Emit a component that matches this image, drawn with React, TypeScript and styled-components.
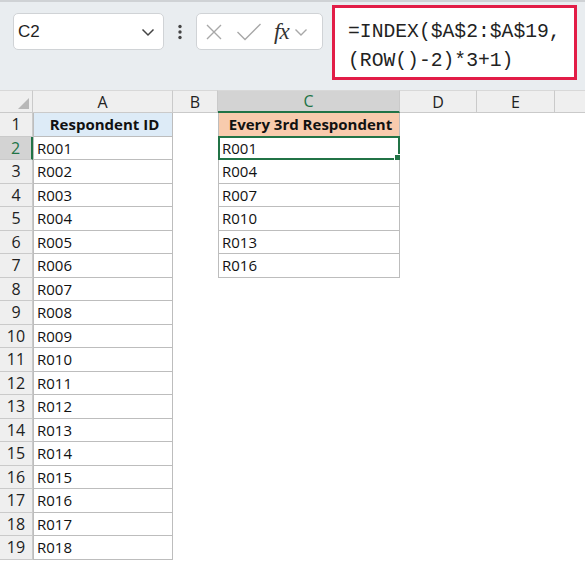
import React from "react";
import styled, { createGlobalStyle } from "styled-components";

const GlobalStyle = createGlobalStyle`
  html, body {
    margin: 0;
    padding: 0;
    background: #ffffff;
  }
  body {
    width: 585px;
    height: 562px;
    overflow: hidden;
    font-family: "Open Sans", "Liberation Sans", sans-serif;
  }
`;

const Window = styled.div`
  width: 585px;
  height: 562px;
  overflow: hidden;
  display: flex;
  flex-direction: column;
`;

const Toolbar = styled.div`
  height: 90px;
  flex: none;
  box-sizing: border-box;
  background: #e9edf0;
  border-top: 2px solid #cfd2d5;
  display: flex;
  align-items: flex-start;
  padding: 3px 0 0 13px;
`;

const Box = styled.div<{ $w: number }>`
  width: ${(p) => p.$w}px;
  height: 37px;
  margin-top: 8px;
  box-sizing: border-box;
  background: #ffffff;
  border: 1px solid #d0d3d6;
  border-radius: 5px;
  display: flex;
  align-items: center;
`;

const NameText = styled.span`
  flex: 1;
  padding-left: 4px;
  font-family: "Liberation Sans", Arial, sans-serif;
  font-size: 17px;
  color: #1f1f1f;
`;

const Dots = styled.div`
  width: 32px;
  height: 37px;
  margin-top: 8px;
  display: flex;
  align-items: center;
  justify-content: center;
`;

const Fx = styled.span`
  font-family: "Liberation Serif", serif;
  font-style: italic;
  font-size: 23px;
  color: #333;
  margin-left: 12px;
  letter-spacing: -1px;
`;

const Formula = styled.div`
  margin-left: 9px;
  width: 245px;
  height: 75px;
  box-sizing: border-box;
  background: #ffffff;
  border: 3px solid #e21d47;
  padding: 10px 0 0 13px;
  font-family: "Liberation Mono", "DejaVu Sans Mono", monospace;
  font-size: 19.7px;
  line-height: 29px;
  color: #222;
  white-space: pre;
`;

const Sheet = styled.div`
  display: grid;
  grid-template-columns: 33px 140px 45px 182px 77px 78px 78px;
  grid-auto-rows: 23.5px;
  grid-template-rows: 23px;
  background: #ffffff;
`;

const ColHead = styled.div<{ $active?: boolean }>`
  box-sizing: border-box;
  background: ${(p) => (p.$active ? "#d3d3d3" : "#efefef")};
  border-right: 1px solid #cacaca;
  border-top: 1px solid #d8d8d8;
  border-bottom: ${(p) => (p.$active ? "2px solid #217346" : "1px solid #cacaca")};
  color: ${(p) => (p.$active ? "#217346" : "#222")};
  font-size: 16px;
  display: flex;
  align-items: center;
  justify-content: center;
`;

const Corner = styled(ColHead)`
  position: relative;
  &::after {
    content: "";
    position: absolute;
    right: 3px;
    bottom: 3px;
    width: 0;
    height: 0;
    border-left: 11px solid transparent;
    border-bottom: 11px solid #b8b8b8;
  }
`;

const RowHead = styled.div<{ $active?: boolean }>`
  box-sizing: border-box;
  background: ${(p) => (p.$active ? "#d3d3d3" : "#efefef")};
  border-bottom: 1px solid #cacaca;
  border-right: ${(p) => (p.$active ? "2px solid #217346" : "1px solid #cacaca")};
  color: ${(p) => (p.$active ? "#217346" : "#222")};
  font-size: 16px;
  display: flex;
  align-items: center;
  justify-content: center;
`;

const Cell = styled.div<{ $fill?: string; $bold?: boolean; $grid?: boolean }>`
  box-sizing: border-box;
  background: ${(p) => p.$fill || "#ffffff"};
  border-right: ${(p) => (p.$grid ? "1px solid #bdbdbd" : "none")};
  border-bottom: ${(p) => (p.$grid ? "1px solid #bdbdbd" : "none")};
  border-left: ${(p) => (p.$grid ? "1px solid #bdbdbd" : "none")};
  font-size: 15px;
  font-weight: ${(p) => (p.$bold ? 700 : 400)};
  color: #111;
  padding-left: 3px;
  display: flex;
  align-items: center;
  justify-content: ${(p) => (p.$bold ? "center" : "flex-start")};
  white-space: nowrap;
  overflow: visible;
  position: relative;
`;

const Selected = styled.div`
  position: absolute;
  left: -1px;
  top: -1px;
  right: -1px;
  bottom: -1px;
  border: 2px solid #217346;
  pointer-events: none;
  &::after {
    content: "";
    position: absolute;
    right: -6px;
    bottom: -6px;
    width: 8px;
    height: 8px;
    background: #217346;
    border: 1px solid #ffffff;
  }
`;

// last column runs off the right edge, so its letter is not in view
const cols = ["A", "B", "C", "D", "E", ""];
const every = ["R001", "R004", "R007", "R010", "R013", "R016"];

function Chevron({ x = 0 }: { x?: number }) {
  return (
    <svg width="14" height="10" viewBox="0 0 14 10" style={{ marginRight: x }}>
      <path d="M1.5 2.5 L7 8 L12.5 2.5" fill="none" stroke="#444" strokeWidth="1.5" />
    </svg>
  );
}

export default function App() {
  const rows = Array.from({ length: 19 }, (_, i) => i + 1);
  return (
    <Window>
      <GlobalStyle />
      <Toolbar>
        <Box $w={151}>
          <NameText>C2</NameText>
          <Chevron x={8} />
        </Box>
        <Dots>
          <svg width="6" height="16" viewBox="0 0 6 16">
            <circle cx="3" cy="2.5" r="1.7" fill="#444" />
            <circle cx="3" cy="8" r="1.7" fill="#444" />
            <circle cx="3" cy="13.5" r="1.7" fill="#444" />
          </svg>
        </Dots>
        <Box $w={127}>
          <svg width="18" height="18" viewBox="0 0 18 18" style={{ marginLeft: 8 }}>
            <path d="M2 2 L16 16 M16 2 L2 16" stroke="#a8a8a8" strokeWidth="1.4" />
          </svg>
          <svg width="26" height="20" viewBox="0 0 26 20" style={{ marginLeft: 13 }}>
            <path d="M1.5 10 L9 17.5 L24.5 2" fill="none" stroke="#a8a8a8" strokeWidth="1.4" />
          </svg>
          <Fx>fx</Fx>
          <svg width="14" height="10" viewBox="0 0 14 10" style={{ marginLeft: 5 }}>
            <path d="M1.5 2.5 L7 8 L12.5 2.5" fill="none" stroke="#a8a8a8" strokeWidth="1.4" />
          </svg>
        </Box>
        <Formula>{"=INDEX($A$2:$A$19,\n(ROW()-2)*3+1)"}</Formula>
      </Toolbar>
      <Sheet>
        <Corner />
        {cols.map((c, i) => (
          <ColHead key={i} $active={c === "C"}>
            {c}
          </ColHead>
        ))}
        {rows.map((r) => (
          <React.Fragment key={r}>
            <RowHead $active={r === 2}>{r}</RowHead>
            {r === 1 ? (
              <Cell $grid $bold $fill="#ddebf7">
                Respondent ID
              </Cell>
            ) : (
              <Cell $grid>{"R" + String(r - 1).padStart(3, "0")}</Cell>
            )}
            <Cell />
            {r === 1 ? (
              <Cell $grid $bold $fill="#f8cbad">
                Every 3rd Respondent
              </Cell>
            ) : r <= 7 ? (
              <Cell $grid>
                {every[r - 2]}
                {r === 2 && <Selected />}
              </Cell>
            ) : (
              <Cell />
            )}
            <Cell />
            <Cell />
            <Cell />
          </React.Fragment>
        ))}
      </Sheet>
    </Window>
  );
}
